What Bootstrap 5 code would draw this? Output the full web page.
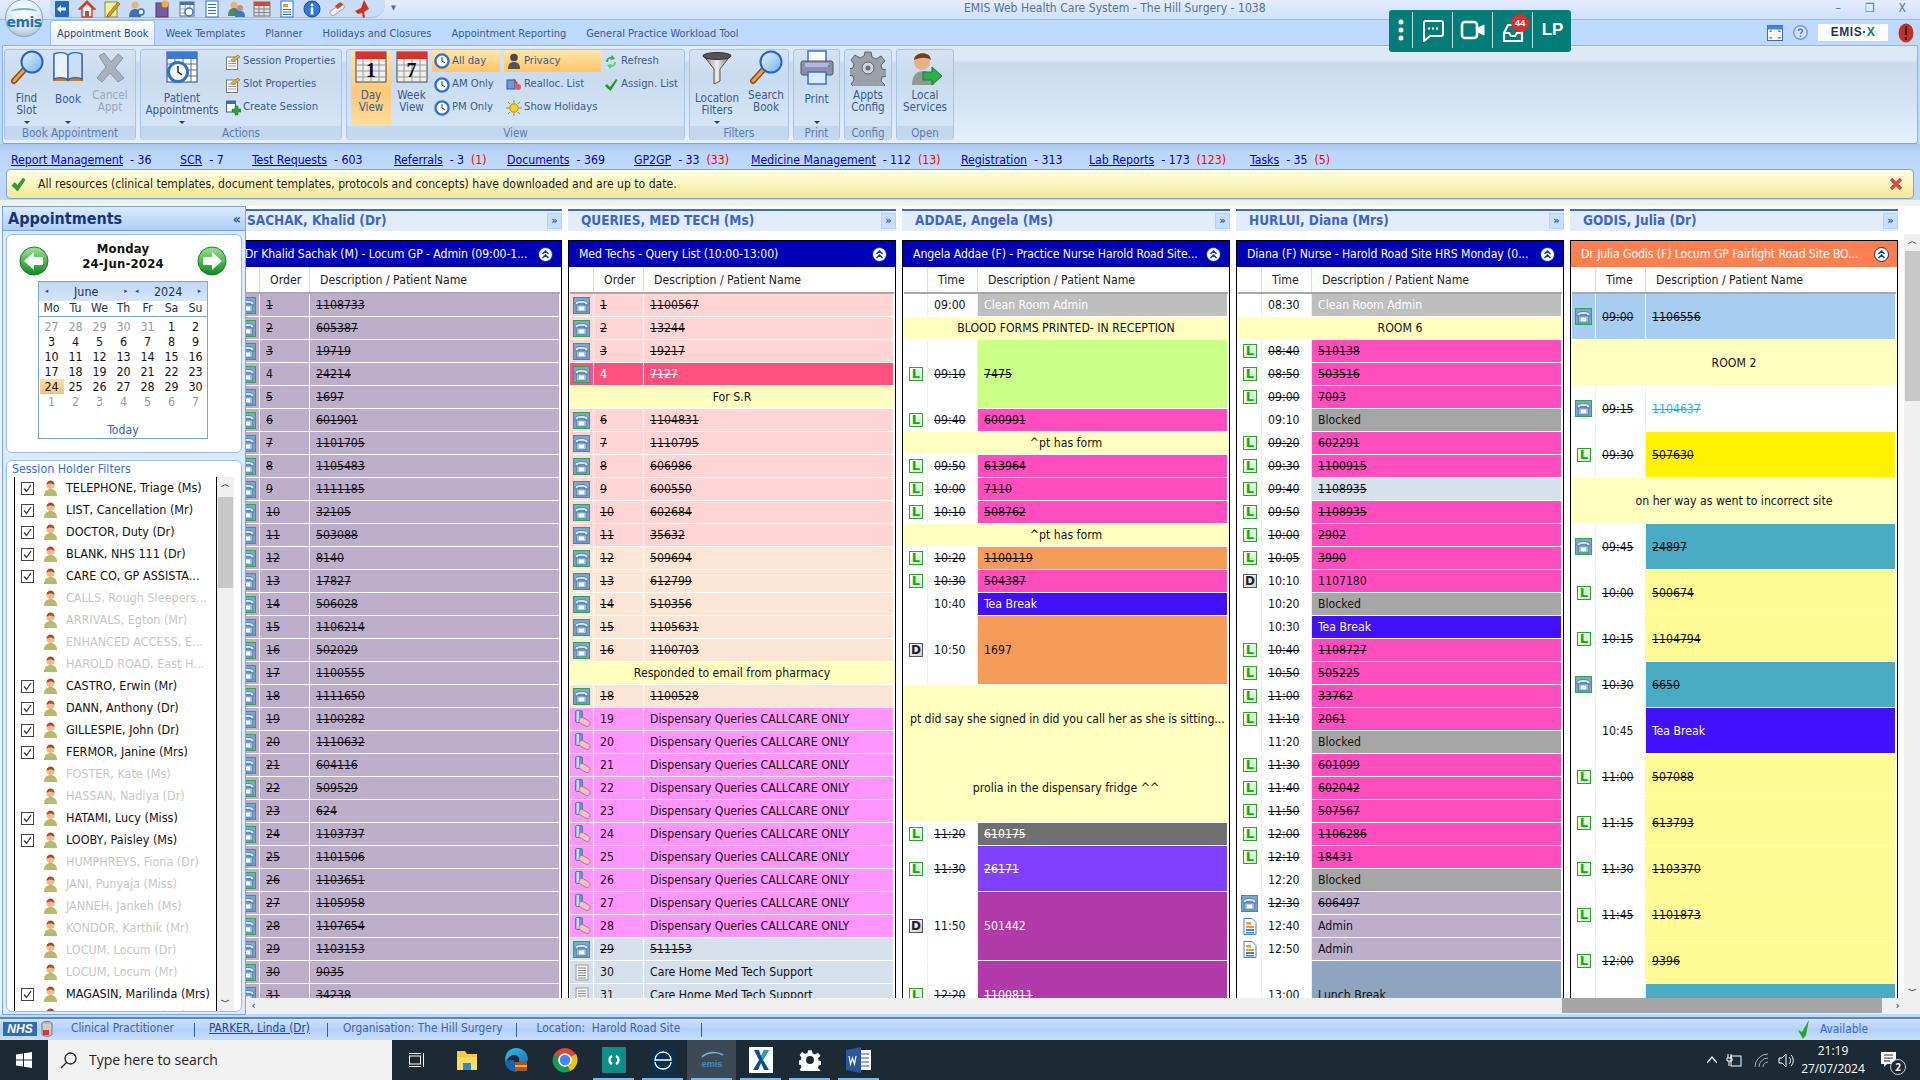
<!DOCTYPE html>
<html lang="en"><head><meta charset="utf-8"><title>EMIS Web Health Care System</title>
<link href="https://cdn.jsdelivr.net/npm/bootstrap@5.3.0/dist/css/bootstrap.min.css" rel="stylesheet">
<script src="https://cdn.jsdelivr.net/npm/bootstrap@5.3.0/dist/js/bootstrap.bundle.min.js"></script>
<style>
:root{--f:"DejaVu Sans Condensed","DejaVu Sans",sans-serif}
html,body{width:1920px;height:1080px;overflow:hidden;margin:0}
body{font-family:var(--f);font-stretch:condensed;font-size:12.2px;color:#111;background:#bfd9fb;display:flex;flex-direction:column;position:relative}
svg{display:block;flex:none}
.titlebar{height:20px;flex:none;background:linear-gradient(#e4edfc,#cfe0f9);border-bottom:1px solid #9fbde9;color:#5a6f98;font-size:12.1px;line-height:16px}
.qat{margin-left:50px;width:335px;height:18px;background:#c9ddf7;border-radius:0 0 14px 8px;border-bottom:1px solid #9fbde9;padding-left:3px;gap:7px}
.qat svg{width:18px;height:18px}
.qatcaret{width:11px;margin-left:6px;color:#56719c;font-size:7px}
.apptitle{margin-left:562px}
.winctl{margin-left:auto;color:#55719c;gap:24px;padding-right:14px;font-size:12px}
.orb{position:absolute;left:5px;top:-1px;width:38px;height:38px;border-radius:50%;background:radial-gradient(circle at 50% 30%,#fff 0,#dbe6f2 55%,#9ab0c8 100%);border:1px solid #8ba3bf;color:#1e76a8;font:700 14px/44px "DejaVu Sans",sans-serif;text-align:center;z-index:5;letter-spacing:-.5px}
.orb::before{content:"";position:absolute;left:5px;top:8px;width:26px;height:7px;border-top:2px solid #5fb4d6;border-radius:50%}
.tabrow{height:25px;flex:none;background:#bdd9fd;padding-left:50px}
.tabrow .nav-link{color:#3c5a8a;padding:5px 10px 0;height:25px;font-size:10.95px;line-height:18px}
.tabrow .nav-link.active{background:linear-gradient(#fff,#e0ecfb);border:1px solid #9dbce8;border-bottom:0;border-radius:3px 3px 0 0;padding:4px 6px 0;color:#2d4a78}
.rightbits{margin-left:auto;padding-right:6px;gap:10px}
.emisx{background:#fff;width:70px;height:17px;color:#1d3763;font:700 12px/17px "Liberation Sans",sans-serif;text-align:center;letter-spacing:.5px}
.emisx i{font-style:normal;color:#0c7f7a}
.ribbon{height:99px;flex:none;margin:0 2px;border:1px solid #8fb3e2;border-radius:2px 2px 3px 3px;border-bottom:1px solid #62b3c8;background:linear-gradient(#dde9f7 0,#dde9f7 14%,#cadaed 18%,#d4e4f6 60%,#e4f0fe 100%);padding:3px 0 0 1px;gap:4px}
.rg{height:91px;border:1px solid #a8c3e3;border-radius:3px;display:flex;flex-direction:column;flex:none;background:linear-gradient(#d5e3f3,#c9dbef 30%,#d7e7f8)}
.rg-b{height:76px;display:flex}
.rg-l{height:14px;background:#c3d7ee;color:#5b7ca9;font-size:11.5px;line-height:14px;text-align:center}
.rb{display:flex;flex-direction:column;align-items:center;height:76px;flex:none;color:#3a5b8d;font-size:11.6px;line-height:12px;text-align:center}
.rb svg.big{width:36px;height:36px}
.rb .lb{padding-top:3px}.rb .lbc{padding-top:6px}.rb .lb1{padding-top:7px}
.rb .car{width:0;height:0;border:3px solid transparent;border-top:3.5px solid #22406e;border-bottom:0;margin-top:5px}
.rb .lb1+.car{margin-top:16px}
.rb.dis{color:#98a7ba}
.rb.act{background:linear-gradient(#ffe29f,#ffc878 55%,#ffdc9a) center 2px/100% 73px no-repeat}
.rs{height:23px;display:flex;align-items:center;gap:2px;color:#3a5b8d;font-size:11.2px;white-space:nowrap;padding-left:2px}
.rs svg{width:16px;height:16px}
.rs.act{background:linear-gradient(#ffe6ad,#ffc468);height:22px;margin-bottom:1px}
.links{height:24px;flex:none;background:linear-gradient(#a9c6ec,#bcd6fa 40%,#bfd9fb);padding:8px 0 0 11px;line-height:16px;font-size:12.2px;color:#0000c8;white-space:nowrap}
.links span{flex:none}
.links span:nth-child(1){width:169px}.links span:nth-child(2){width:72px}.links span:nth-child(3){width:142px}.links span:nth-child(4){width:113px}.links span:nth-child(5){width:127px}.links span:nth-child(6){width:117px}.links span:nth-child(7){width:210px}.links span:nth-child(8){width:128px}.links span:nth-child(9){width:161px}
.links a{color:#0000e8}
.links b{font-weight:400;color:#f00}
.notice{height:30px;flex:none;margin:1px 6px;border:1px solid #7ea6d8;border-radius:4px;background:linear-gradient(#fffee4,#fbf6bd 50%,#f1e690);padding:0 10px 0 4px;gap:12px;color:#222;font-size:12.1px}
.main{flex:1;min-height:0;display:flex;background:#f0f0f0}
.side{width:244px;flex:none;margin-left:2px;height:809px;margin-top:6px;border:1px solid #7ba6e0;background:#dae9fb}
.side-h{height:24px;background:linear-gradient(#dcebfd,#aecdf3);border-bottom:1px solid #7ba6e0;padding:0 4px 0 5px;color:#15357a;font:700 16px/24px var(--f)}
.side-h .cv{margin-left:auto;font-size:14px;color:#31558f;font-weight:700}
.pane{background:#fff;border:1px solid #9cbdea;border-radius:6px;margin:3px 3px 0 3px}
.datepane{height:219px;padding:6px 0 0}
.nav-arrow{width:30px;height:30px;margin-top:5px}
.datehd{font-weight:700;line-height:15px;font-size:13px;color:#111;letter-spacing:.2px}
.cal{width:170px;height:158px;border:1px solid #7ba6e0;margin:5px 0 0 31px}
.cal-h{height:19px;background:linear-gradient(#bfd6f3,#d7e6f8);padding:0 6px;color:#23324a;line-height:19px;font-size:12.4px}
.cal-h i{font-style:normal;font-size:7px;color:#2f4c77}
.cal-g{display:grid;grid-template-columns:repeat(7,24px);padding-left:.5px;text-align:center}
.cal-w{height:15px;line-height:15px;border-bottom:1px solid #7ba6e0;margin-bottom:2px;padding-bottom:15px;color:#23324a;font-size:12.2px}
.cal-w span{height:15px}
.cal-d span{height:15px;line-height:15px;font-size:12.4px;color:#111}
.cal-d .o{color:#9a9a9a}.cal-d .s{background:linear-gradient(#fde0a8,#f7c272)}
.cal-t{height:25px;line-height:25px;text-align:center;color:#3c63a8;margin-top:9px}
.holdpane{height:552px;margin-top:7px;padding:1px 0 0 5px;overflow:hidden}
.holdpane .t{color:#3b6fd8;line-height:15px;font-size:12.3px;padding-bottom:0}
.hold{height:534px;margin-left:2px;border-left:1px solid #000;overflow:hidden}
.hold-l{width:202px;border-right:1px solid #000;flex:none;overflow:hidden}
.hr{height:22px;padding-left:6px;gap:8.5px;white-space:nowrap;font-size:12.5px;align-items:center;display:flex;color:#111}
.hr .cb{width:13px;height:13px;flex:none;border:1px solid #444;display:block}
.hr .cb svg{width:11px;height:11px}
.hr .nb{width:13px;flex:none}
.hr svg.pe{width:15px;height:16px}
.hr.off{color:#c7c7c7}
.vs{background:#f0f0f0;display:flex;flex-direction:column;align-items:center;color:#555;flex:none}
.vs .th{background:#c8c8c8}
.vs .ar{font-size:9px;line-height:14px;height:16px;font-weight:700;color:#444}
.hold .vs{width:17px}.hold .vs .th{width:15px;height:91px;margin:4px 0 0}
.hold .vs .sp{flex:1}
.center{flex:1;min-width:0;display:flex;flex-direction:column;background:#fff;margin-top:6px}
.cols-w{flex:1;min-height:0;display:flex;overflow:hidden;background:#fff}
.cols{flex:1;min-width:0;overflow:hidden;display:flex;gap:6px;padding-top:3px}
.col{width:328px;flex:none}
.col:first-child{margin-left:-12px}
.resh{height:22px;background:#e3ecfa;border-top:2px solid #3a6ccc;color:#3b66c6;font:700 13.5px/19px var(--f);padding-left:13px;position:relative}
.resh .go{position:absolute;right:0;top:2px;width:15px;height:16px;background:#c8dffb;border:1px solid #b6d2f5;color:#2c56a8;font:700 11px/14px var(--f);text-align:center}
.sess{margin-top:9px;height:760px;border:1px solid #000;overflow:hidden;background:#fff}
.sess-t{height:26px;background:#0000b8;color:#fff;padding:0 3px 0 10px;line-height:26px;font-size:12.2px;white-space:nowrap}
.sess-t.or{background:#ff7f50}
.sess-t span{flex:1;min-width:0;overflow:hidden;letter-spacing:-.1px}
.sess-t svg{width:15px;height:15px;margin:0 5px 0 auto;align-self:center}
.gh{height:27px;border-bottom:2px solid #a9a9a9;border-top:1px solid #fff;line-height:25px;color:#222;margin:0 1px}
.gh div{border-right:1px solid #ddd}
.gh div:last-child{border:0}
.c1{width:24px;flex:none;display:flex;align-items:center;justify-content:center}
.c2{width:50px;flex:none;padding-left:6px;white-space:nowrap}
.c3{flex:1;min-width:0;padding-left:6px;white-space:nowrap;overflow:hidden}
.gh .c2{padding-left:10px}.gh .c3{padding-left:10px}
.rw{display:flex;margin:0 2px 1px 1px;height:22px;line-height:22px;color:#111}
.rw.r2{height:45px;line-height:47px}.rw.r3{height:68px;line-height:68px}
.rw .c1,.rw .c2{border-right:1px solid #efefef}
.rw.solid .c1,.rw.solid .c2{border-right-color:#fff}
.rw.note{display:block;background:#ffffc0;text-align:center;margin:0 0 1px;white-space:nowrap;overflow:hidden;text-overflow:ellipsis;padding:0 8px}
.rw.note.tl{text-align:left;padding:0 2px 0 7px;letter-spacing:-.05px}
.tag{width:14px;height:14px;display:block;border:1px solid #2da52d;background:linear-gradient(135deg,#fff,#cfe8cf);color:#0bb00b;font:700 13px/12px "DejaVu Sans",sans-serif;text-align:center;margin-left:1px}
.tag-d{border-color:#555;background:linear-gradient(135deg,#fff,#ccc);color:#222;font-size:12px}
.ph{width:17px;height:17px}.dsp{width:18px;height:18px}
.docn{width:16px;height:17px}
.b-pur{background:#bdaecb}.b-pink{background:#ffd4d4}.b-peach{background:#fbe5d4}.b-hot{background:#ff5080;color:#fff}.b-dis{background:#ff96ff}.b-slate{background:#d5e0eb}
.b-gry{background:#bebebe;color:#fff}.b-grn{background:#ccff88}.b-mag{background:#ff4dbf}.b-org{background:#f59c5a}.b-tea{background:#4010ff;color:#fff}.b-dk{background:#707070;color:#fff}.b-vio{background:#8040ff;color:#fff}.b-plum{background:#b03aa8;color:#fff}.b-blk{background:#a6a6a6}.b-lun{background:#8fa4bf}
.b-sky{background:#a7cdf0}.b-yel{background:#fff200}.b-teal{background:#4aabc5}.b-lem{background:#fffb94}.b-wh{background:#fff;color:#1eb4e8}
.vsr{width:20px;padding-left:4px;background:#fff}
.vsr .in{background:#f0f0f0;width:16px;height:765px;margin-top:28px;display:flex;flex-direction:column;align-items:center}
.vsr .th{width:15px;height:150px;background:#c8c8c8;margin-top:2px}
.vsr .ar{font-size:9px;font-weight:700;color:#444;height:15px;line-height:15px}
.hs{height:16px;flex:none;background:#f0f0f0;color:#444;font-size:10px;font-weight:700;line-height:16px}
.hs .th{width:320px;height:15px;background:#a5a5a5;margin-left:auto}
.hs .e{width:15px;text-align:center;flex:none}
.status{height:23px;margin-top:3px;flex:none;border-top:2px solid #5d86bd;background:linear-gradient(#cde2fb,#b5d0f6 50%,#c8defa);color:#3f64a8;padding:0 0 0 3px;font-size:11.8px;line-height:19px}
.status .nhs{background:#2f6cb5;color:#fff;font:italic 700 12px/14px "Liberation Sans",sans-serif;width:34px;height:14px;text-align:center;margin-top:3px}
.status .sep{border-left:1px solid #355e9e;height:14px;margin-top:4px}
.status a{color:#24498f}
.avail{margin-left:auto;padding-right:52px;color:#3668d8;gap:8px}
.task{height:40px;flex:none;background:#1c2a36;color:#fff}
.start{width:48px}
.search{width:344px;background:#f1f1f1;color:#222;font:14px/40px "Open Sans",sans-serif;padding-left:12px;gap:12px}
.tb{width:49px;height:40px;position:relative}
.tb.on::after{content:"";position:absolute;left:4px;right:4px;bottom:0;height:2px;background:#76b9ed}
.tb.cur{background:#3d4954}
.tray{margin-left:auto;font:12px/18px "Open Sans",sans-serif;padding-right:22px}
.clock{text-align:center;width:66px;margin:0 14px 0 6px}
.teal{position:absolute;left:1389px;top:10px;width:182px;height:42px;background:#047d78;border-radius:3px;z-index:6;color:#fff}
.teal>div{height:36px;margin-top:2px;border-left:1px solid #bfe0de;width:40px;position:relative;flex:none}
.teal>div:first-child{border:0;width:23px}
.teal .n{position:absolute;right:3px;top:2px;width:18px;height:18px;border-radius:50%;background:#e32b2b;color:#fff;font:700 9.5px/18px "Liberation Sans",sans-serif;text-align:center}
.teal .lp{font:700 17px/36px "Liberation Sans",sans-serif}
</style></head>
<body>
<svg width="0" height="0" class="overflow-hidden" style="flex:none"><defs>
<linearGradient id="gG" x1="0" y1="0" x2="0" y2="1"><stop offset="0" stop-color="#9be48f"/><stop offset="1" stop-color="#0e8a1e"/></linearGradient>
<linearGradient id="gM" x1="0" y1="0" x2="1" y2="1"><stop offset="0" stop-color="#e8f4ff"/><stop offset="1" stop-color="#74b2ef"/></linearGradient>
<linearGradient id="gF" x1="0" y1="0" x2="1" y2="0"><stop offset="0" stop-color="#777"/><stop offset=".5" stop-color="#eee"/><stop offset="1" stop-color="#666"/></linearGradient>
<linearGradient id="gE" x1="0" y1="0" x2="1" y2="1"><stop offset="0" stop-color="#2fc5e0"/><stop offset="1" stop-color="#1a70c0"/></linearGradient>
<symbol id="mag" viewBox="0 0 36 36"><path d="M15 20 5 31" stroke="#8a4f12" stroke-width="6" stroke-linecap="round"/><path d="M15 20 5 31" stroke="#e8a040" stroke-width="3" stroke-linecap="round"/><circle cx="23" cy="12" r="10.5" fill="url(#gM)" stroke="#2563c8" stroke-width="2"/></symbol>
<symbol id="book" viewBox="0 0 36 36"><path d="M3 5h30v26H3z" fill="#c47a2a"/><path d="M4 4c5-2 11-2 14 1v25c-3-3-9-3-14-1z" fill="#e8f2ff" stroke="#3468b4" stroke-width="1.4"/><path d="M32 4c-5-2-11-2-14 1v25c3-3 9-3 14-1z" fill="#c9def8" stroke="#3468b4" stroke-width="1.4"/></symbol>
<symbol id="xx" viewBox="0 0 36 36"><path d="M7 6l5-3 7 9 7-8 5 4-8 10 9 10-6 4-8-9-8 9-5-4 9-11z" fill="#aab3bd" stroke="#8b95a0"/></symbol>
<symbol id="calc" viewBox="0 0 36 36"><rect x="3" y="2" width="30" height="30" fill="#fff" stroke="#2b3d70"/><rect x="3" y="2" width="30" height="7" fill="#3c78d8"/><path d="M3 14h30M3 20h30M3 26h30M11 9v23M19 9v23M27 9v23" stroke="#667"/><circle cx="14" cy="22" r="9.5" fill="#fff" stroke="#2f6fd0" stroke-width="3"/><path d="M14 16v6l4 3" stroke="#223" stroke-width="1.5" fill="none"/></symbol>
<symbol id="docp" viewBox="0 0 16 16"><rect x="1.5" y="3" width="11" height="12.5" fill="#fff" stroke="#7b7b7b"/><path d="M3 7h8M3 9.500h8M3 12h8" stroke="#99a"/><path d="M6 6l7-5 2 2-7 5z" fill="#e4b43a" stroke="#8a6a1a" stroke-width=".6"/></symbol>
<symbol id="docg" viewBox="0 0 16 16"><rect x="1.5" y="1" width="9" height="11" fill="#fff" stroke="#47639a"/><rect x="1.5" y="1" width="9" height="3" fill="#3a68c0"/><path d="M10 6h3v3h3v3h-3v3h-3v-3H7V9h3z" fill="#27a834" stroke="#156b1d" stroke-width=".5"/></symbol>
<symbol id="cal1" viewBox="0 0 36 36"><rect x="3" y="2" width="30" height="30" fill="#eee" stroke="#444"/><rect x="3" y="2" width="30" height="7" fill="#d8322a"/><path d="M3 15h30M3 21h30M3 27h30M10 9v23M18 9v23M26 9v23" stroke="#999"/></symbol>
<symbol id="clk" viewBox="0 0 16 16"><circle cx="8" cy="8" r="6.6" fill="#fff" stroke="#2f74d2" stroke-width="2.4"/><path d="M8 4v4l3 2" stroke="#345" fill="none"/></symbol>
<symbol id="priv" viewBox="0 0 16 16"><circle cx="8" cy="4.5" r="3.8" fill="#4a4a4a"/><path d="M2 16c0-6 3-7 6-7s6 1 6 7z" fill="#555"/></symbol>
<symbol id="rl" viewBox="0 0 16 16"><rect x="1" y="3" width="8" height="9" fill="#6a9ad8" stroke="#36598f"/><path d="M7 1l5 5-2 2z" fill="#d83a3a"/><circle cx="12" cy="10" r="3" fill="#e25a5a"/></symbol>
<symbol id="sun" viewBox="0 0 16 16"><circle cx="8" cy="8" r="4.2" fill="#f5d426" stroke="#a98d10"/><path d="M8 0v3M8 13v3M0 8h3M13 8h3M2 2l2 2M12 12l2 2M14 2l-2 2M4 12l-2 2" stroke="#a98d10"/></symbol>
<symbol id="ref" viewBox="0 0 16 16"><path d="M3 8c0-3 2-5 5-5l1-2 3 4-5 1 1-1.500c-2 0-3 1-3 3.500z" fill="#2cb34a"/><path d="M13 8c0 3-2 5-5 5l-1 2-3-4 5-1-1 1.500c2 0 3-1 3-3.500z" fill="#5bd25f"/></symbol>
<symbol id="chk" viewBox="0 0 16 16"><path d="M2 9l2-2 3 3 6-8 1.500 1L7.500 14z" fill="#1e9a2a"/></symbol>
<symbol id="fun" viewBox="0 0 36 36"><path d="M4 5h28L21 19v12l-6 3V19z" fill="url(#gF)" stroke="#555"/><ellipse cx="18" cy="6" rx="14" ry="3.500" fill="#555" stroke="#333"/></symbol>
<symbol id="prn" viewBox="0 0 36 36"><rect x="9" y="1" width="18" height="12" fill="#fff" stroke="#2f74d2" stroke-width="1.500"/><rect x="2" y="11" width="32" height="14" rx="2" fill="#8b8fa8" stroke="#555"/><rect x="6" y="13" width="24" height="4" fill="#b9b3e8"/><rect x="9" y="22" width="18" height="12" fill="#dbeaff" stroke="#2f74d2" stroke-width="1.500"/><circle cx="30" cy="16" r="1.300" fill="#2cc04a"/></symbol>
<symbol id="gear" viewBox="0 0 36 36"><path d="M15 2h6l1 5 4 2 5-3 4 5-4 4 1 4 5 1v6l-5 1-1 4 4 4-5 4-4-3-4 2-1 4h-6l-1-4-4-2-4 3-5-5 3-4-1-4-5-1v-6l5-1 1-4-3-4 4-5 5 3 4-2z" fill="#9aa0a8" stroke="#5d636b"/><circle cx="18" cy="18" r="6" fill="#cfd4da" stroke="#5d636b"/><circle cx="18" cy="18" r="2.500" fill="#6a7078"/></symbol>
<symbol id="loc" viewBox="0 0 36 36"><path d="M5 35c0-10 5-14 11-14s11 4 11 14z" fill="#8f9a8f"/><circle cx="15" cy="12" r="8" fill="#e7b08a"/><path d="M7 10c0-8 16-10 17 0-4-3-10-3-17 0z" fill="#7a3d18"/><path d="M16 22h9v-5l10 9-10 9v-5h-9z" fill="#2caf4a" stroke="#1a7a30"/></symbol>
<symbol id="ph" viewBox="0 0 16 16"><rect x=".5" y=".5" width="15" height="15" fill="#78a9cf" stroke="#2fa64a"/><path d="M2 5.500C4 2.500 12 2.500 14 5.500V7.500H11V6H5V7.500H2z" fill="#d9e8f3" stroke="#3e6c96" stroke-width=".7"/><rect x="3" y="7.500" width="10" height="6.500" fill="#9bbcdc" stroke="#3e6c96" stroke-width=".7"/><rect x="5.500" y="9" width="5" height="3.500" fill="#fff"/></symbol>
<symbol id="dsp" viewBox="0 0 18 18"><rect x="2.500" y="0.500" width="7" height="12" rx="1.500" fill="#5d97d5" stroke="#3e6c96" stroke-width=".7"/><rect x="3.500" y="1" width="2.500" height="11" fill="#c5dcf4"/><rect x="5.500" y="9" width="12" height="6" rx="3" transform="rotate(30 11.500 12)" fill="#f0c4c4" stroke="#a66" stroke-width=".7"/></symbol>
<symbol id="lst" viewBox="0 0 16 16"><rect x="2" y=".5" width="12" height="15" fill="#f6f6f6" stroke="#9a9a9a"/><path d="M4 3.500h8M4 6h8M4 8.500h8M4 11h8M4 13.500h8" stroke="#8a8a8a"/></symbol>
<symbol id="doc" viewBox="0 0 16 17"><path d="M2 .5h8l4 4v12H2z" fill="#fff" stroke="#3e82d8"/><rect x="4" y="4" width="5" height="2.500" fill="#f09a2a"/><rect x="4" y="8" width="8" height="2" fill="#f09a2a"/><rect x="4" y="11" width="8" height="2" fill="#3e82d8"/><rect x="4" y="14" width="8" height="1.500" fill="#3e82d8"/></symbol>
<symbol id="pe" viewBox="0 0 15 16"><path d="M1 16c0-5 3-7 6.500-7s6.500 2 6.500 7z" fill="#b4bb6a"/><circle cx="7.500" cy="5" r="4" fill="#efb98a"/><path d="M3.500 5c0-6 8-6 8 0-2-2-6-2-8 0z" fill="#a94e1c"/></symbol>
<symbol id="carr" viewBox="0 0 15 15"><circle cx="7.500" cy="7.500" r="7" fill="#fff" stroke="#0a2a6a"/><path d="M4.500 7 7.500 4l3 3M4.500 11l3-3 3 3" fill="none" stroke="#0c3ea0" stroke-width="1.500"/></symbol>
</defs></svg>

<div class="orb">emis</div>
<div class="teal d-flex">
 <div class="d-flex align-items-center justify-content-center"><svg width="6" height="22" viewBox="0 0 6 22"><circle cx="3" cy="3" r="2.500" fill="#fff"/><circle cx="3" cy="11" r="2.500" fill="#fff"/><circle cx="3" cy="19" r="2.500" fill="#fff"/></svg></div>
 <div class="d-flex align-items-center justify-content-center"><svg width="24" height="24" viewBox="0 0 24 24" fill="none" stroke="#fff" stroke-width="2"><path d="M4 3h16a2 2 0 0 1 2 2v11a2 2 0 0 1-2 2H9l-6 5V4z"/><path d="M8 10.500h.01M12 10.500h.01M16 10.500h.01" stroke-linecap="round" stroke-width="2.400"/></svg></div>
 <div class="d-flex align-items-center justify-content-center"><svg width="26" height="20" viewBox="0 0 26 20" fill="none" stroke="#fff" stroke-width="2.600"><rect x="2" y="2" width="15" height="16" rx="3"/><path d="M18 8l6-3v10l-6-3z" fill="#fff" stroke-width="1"/></svg></div>
 <div class="d-flex align-items-center justify-content-center"><svg width="24" height="24" viewBox="0 0 24 24" fill="none" stroke="#fff" stroke-width="2.200" class="mt-1"><path d="M7 5h10l4 8v8H3v-8z"/><path d="M3 13h5l2 3h4l2-3h5"/></svg><span class="n">44</span></div>
 <div class="text-center lp">LP</div>
</div>

<header class="titlebar d-flex">
 <div class="qat d-flex align-items-center">
  <svg viewBox="0 0 18 18"><rect x="2" y="1" width="14" height="16" rx="1" fill="#1f68c8"/><path d="M13 7.500H8V5L4 9l4 4v-2.500h5z" fill="#fff"/></svg>
  <svg viewBox="0 0 18 18"><path d="M9 1 1 9h3v8h10V9h3z" fill="#f3f3f3" stroke="#c8402a" stroke-width="1.400"/><path d="M9 1 1 9h3l5-5 5 5h3z" fill="#d8402a"/><rect x="7" y="11" width="4" height="6" fill="#b05a3a"/></svg>
  <svg viewBox="0 0 18 18"><rect x="2" y="2" width="12" height="15" fill="#f6ee9a" stroke="#8f8a40"/><path d="M5 14 15 2l2 2L7 16l-3 1z" fill="#d89a1e" stroke="#6d4d10" stroke-width=".6"/></svg>
  <svg viewBox="0 0 18 18"><circle cx="7" cy="5" r="3.500" fill="#e7b08a"/><path d="M1 17c0-6 3-8 6-8s6 2 6 8z" fill="#3f6fb4"/><circle cx="13" cy="12" r="3" fill="#fff" stroke="#2f74d2" stroke-width="1.400"/></svg>
  <svg viewBox="0 0 18 18"><rect x="3" y="3" width="12" height="14" fill="#7a5aa0" stroke="#4a3a70"/><circle cx="12" cy="4" r="3.500" fill="#f0b030"/></svg>
  <svg viewBox="0 0 18 18"><rect x="2" y="2" width="14" height="14" fill="#fff" stroke="#4f6fa8"/><rect x="2" y="2" width="14" height="3" fill="#4f6fa8"/><path d="M2 9h14M2 13h14M7 5v11M12 5v11" stroke="#99a"/><circle cx="11" cy="12" r="4" fill="#fff" stroke="#2f74d2" stroke-width="1.500"/></svg>
  <svg viewBox="0 0 18 18"><rect x="3" y="1" width="12" height="16" fill="#fff" stroke="#2f74d2"/><path d="M5 4.500h8M5 7.500h8M5 10.500h8M5 13.500h8" stroke="#2f74d2"/></svg>
  <svg viewBox="0 0 18 18"><circle cx="6" cy="5" r="3.500" fill="#e7b08a"/><path d="M0 16c0-6 3-8 6-8s6 2 6 8z" fill="#4f8a5a"/><circle cx="12" cy="8" r="3" fill="#c98f6a"/><path d="M7 17c0-5 2-6 5-6s5 1 5 6z" fill="#3a78d0"/></svg>
  <svg viewBox="0 0 18 18"><rect x="1" y="2" width="16" height="14" fill="#ddd" stroke="#777"/><rect x="1" y="2" width="16" height="4" fill="#d04a3a"/><path d="M1 9h16M1 12.500h16M6 6v10M11 6v10" stroke="#888"/></svg>
  <svg viewBox="0 0 18 18"><rect x="3" y="1" width="12" height="16" fill="#fff" stroke="#2f74d2"/><rect x="5" y="4" width="5" height="3" fill="#f09a2a"/><path d="M5 9.500h8M5 12h8M5 14.500h8" stroke="#2f74d2"/></svg>
  <svg viewBox="0 0 18 18"><circle cx="9" cy="9" r="8" fill="#2d78d8" stroke="#1a4f9c"/><circle cx="9" cy="5" r="1.500" fill="#fff"/><rect x="7.700" y="7.500" width="2.600" height="7" fill="#fff"/></svg>
  <svg viewBox="0 0 18 18"><rect x="1" y="7" width="16" height="5.500" rx="2.700" transform="rotate(-35 9 9.500)" fill="#f3f3f3" stroke="#aaa"/><path d="M9.500 9 14.800 5.300A2.700 2.700 0 0 0 11.500 2.500L7 6z" fill="#d8402a"/></svg>
  <svg viewBox="0 0 18 18"><path d="M11 0 8 8 2 11l3 3 4-1 1 5 2-1-1-5 5-3z" fill="#d03020"/></svg>
 </div>
 <div class="qatcaret">▼</div>
 <div class="apptitle">EMIS Web Health Care System - The Hill Surgery - 1038</div>
 <div class="winctl d-flex"><span>–</span><span>❐</span><span>X</span></div>
</header>
<div class="tabrow d-flex">
 <ul class="nav flex-nowrap">
  <li class="nav-item"><a class="nav-link active" href="#">Appointment Book</a></li>
  <li class="nav-item"><a class="nav-link" href="#">Week Templates</a></li>
  <li class="nav-item"><a class="nav-link" href="#">Planner</a></li>
  <li class="nav-item"><a class="nav-link" href="#">Holidays and Closures</a></li>
  <li class="nav-item"><a class="nav-link" href="#">Appointment Reporting</a></li>
  <li class="nav-item"><a class="nav-link" href="#">General Practice Workload Tool</a></li>
 </ul>
 <div class="rightbits d-flex align-items-center">
  <svg width="16" height="16" viewBox="0 0 16 16"><rect x=".5" y=".5" width="15" height="15" fill="#fff" stroke="#3a6cc0"/><rect x=".5" y=".5" width="15" height="4" fill="#3a8ad8"/><path d="M3 7v-1h2M13 7v-1h-2M3 12v1h2M13 12v1h-2" stroke="#d02020" fill="none"/></svg>
  <svg width="15" height="15" viewBox="0 0 15 15"><circle cx="7.500" cy="7.500" r="6.800" fill="#cfe0f4" stroke="#7f9cc4" stroke-width="1.400"/><path d="M5.500 6c0-2.500 4-2.500 4 0 0 1.500-2 1.500-2 3M7.500 10.500v1.500" stroke="#4a6a9a" fill="none" stroke-width="1.300"/></svg>
  <div class="emisx">EMIS·<i>X</i></div>
  <svg width="16" height="20" viewBox="0 0 16 20"><ellipse cx="8" cy="10" rx="7.500" ry="9.500" fill="#c8301e"/><path d="M8 3v9M8 14v3" stroke="#300" stroke-width="2"/></svg>
 </div>
</div>

<section class="ribbon d-flex">
 <div class="rg" style="width:132px"><div class="rg-b">
   <div class="rb" style="width:43px"><svg class="big"><use href="#mag"/></svg><div class="lbc">Find<br>Slot</div><div class="car"></div></div>
   <div class="rb" style="width:40px"><svg class="big"><use href="#book"/></svg><div class="lb1">Book</div><div class="car"></div></div>
   <div class="rb dis" style="width:44px"><svg class="big"><use href="#xx"/></svg><div class="lb">Cancel<br>Appt</div></div>
  </div><div class="rg-l">Book Appointment</div></div>
 <div class="rg" style="width:202px"><div class="rg-b">
   <div class="rb" style="width:82px"><svg class="big"><use href="#calc"/></svg><div class="lbc">Patient<br>Appointments</div><div class="car"></div></div>
   <div class="d-flex flex-column">
    <div class="rs"><svg><use href="#docp"/></svg>Session Properties</div><div class="rs"><svg><use href="#docp"/></svg>Slot Properties</div><div class="rs"><svg><use href="#docg"/></svg>Create Session</div>
   </div></div><div class="rg-l">Actions</div></div>
 <div class="rg" style="width:339px"><div class="rg-b ps-1">
   <div class="rb act" style="width:40px"><div class="position-relative"><svg class="big"><use href="#cal1"/></svg><b class="position-absolute top-50 start-50 translate-middle pt-1" style="font:700 20px 'Liberation Serif',serif;color:#111">1</b></div><div class="lb">Day<br>View</div></div>
   <div class="rb" style="width:41px"><div class="position-relative"><svg class="big"><use href="#cal1"/></svg><b class="position-absolute top-50 start-50 translate-middle pt-1" style="font:700 20px 'Liberation Serif',serif;color:#111">7</b></div><div class="lb">Week<br>View</div></div>
   <div class="d-flex flex-column" style="width:68px">
    <div class="rs act"><svg><use href="#clk"/></svg>All day</div><div class="rs"><svg><use href="#clk"/></svg>AM Only</div><div class="rs"><svg><use href="#clk"/></svg>PM Only</div></div>
   <div class="d-flex flex-column ms-1" style="width:97px">
    <div class="rs act"><svg><use href="#priv"/></svg>Privacy</div><div class="rs"><svg><use href="#rl"/></svg>Realloc. List</div><div class="rs"><svg><use href="#sun"/></svg>Show Holidays</div></div>
   <div class="d-flex flex-column">
    <div class="rs"><svg><use href="#ref"/></svg>Refresh</div><div class="rs"><svg><use href="#chk"/></svg>Assign. List</div></div>
  </div><div class="rg-l">View</div></div>
 <div class="rg" style="width:100px"><div class="rg-b">
   <div class="rb" style="width:54px"><svg class="big"><use href="#fun"/></svg><div class="lbc">Location<br>Filters</div><div class="car"></div></div>
   <div class="rb" style="width:44px"><svg class="big"><use href="#mag"/></svg><div class="lb">Search<br>Book</div></div>
  </div><div class="rg-l">Filters</div></div>
 <div class="rg" style="width:47px"><div class="rg-b"><div class="rb w-100"><svg class="big"><use href="#prn"/></svg><div class="lb1">Print</div><div class="car"></div></div></div><div class="rg-l">Print</div></div>
 <div class="rg" style="width:48px"><div class="rg-b"><div class="rb w-100"><svg class="big"><use href="#gear"/></svg><div class="lb">Appts<br>Config</div></div></div><div class="rg-l">Config</div></div>
 <div class="rg" style="width:58px"><div class="rg-b"><div class="rb w-100"><svg class="big"><use href="#loc"/></svg><div class="lb">Local<br>Services</div></div></div><div class="rg-l">Open</div></div>
</section>

<nav class="links d-flex">
 <span><a href="#">Report Management</a> &nbsp;- 36</span><span><a href="#">SCR</a> &nbsp;- 7</span><span><a href="#">Test Requests</a> &nbsp;- 603</span><span><a href="#">Referrals</a> &nbsp;- 3 &nbsp;<b>(1)</b></span><span><a href="#">Documents</a> &nbsp;- 369</span><span><a href="#">GP2GP</a> &nbsp;- 33 &nbsp;<b>(33)</b></span><span><a href="#">Medicine Management</a> &nbsp;- 112 &nbsp;<b>(13)</b></span><span><a href="#">Registration</a> &nbsp;- 313</span><span><a href="#">Lab Reports</a> &nbsp;- 173 &nbsp;<b>(123)</b></span><span><a href="#">Tasks</a> &nbsp;- 35 &nbsp;<b>(5)</b></span>
</nav>
<div class="notice d-flex align-items-center">
 <svg width="15" height="15" viewBox="0 0 16 16"><path d="M1 9l3-3 3 3 6-8 2 2-8 12z" fill="#2e9a38" stroke="#1f6a28" stroke-width=".6"/></svg>
 <span>All resources (clinical templates, document templates, protocols and concepts) have downloaded and are up to date.</span>
 <svg class="ms-auto" width="14" height="14" viewBox="0 0 14 14"><path d="M2 2l10 10M12 2 2 12" stroke="#e0473f" stroke-width="3.400"/></svg>
</div>

<main class="main">
 <aside class="side">
  <div class="side-h d-flex">Appointments<span class="cv">«</span></div>
  <div class="pane datepane">
   <div class="d-flex justify-content-between" style="padding:0 14px 0 12px">
    <svg class="nav-arrow" viewBox="0 0 30 30"><circle cx="15" cy="15" r="14" fill="url(#gG)" stroke="#1c7a2a"/><path d="M5 15l10-9v5h9v8h-9v5z" fill="#fff"/></svg>
    <div class="datehd text-center"><div>Monday</div><div>24-Jun-2024</div></div>
    <svg class="nav-arrow" viewBox="0 0 30 30"><circle cx="15" cy="15" r="14" fill="url(#gG)" stroke="#1c7a2a"/><path d="M25 15l-10-9v5H6v8h9v5z" fill="#fff"/></svg>
   </div>
   <div class="cal">
    <div class="cal-h d-flex"><i>◂</i><span class="text-center" style="width:76px">June</span><i>▸</i><i class="ms-2">◂</i><span class="text-center flex-fill">2024</span><i>▸</i></div>
    <div class="cal-g cal-w"><span>Mo</span><span>Tu</span><span>We</span><span>Th</span><span>Fr</span><span>Sa</span><span>Su</span></div>
    <div class="cal-g cal-d" id="days"></div>
    <div class="cal-t">Today</div>
   </div>
  </div>
  <div class="pane holdpane">
   <div class="t">Session Holder Filters</div>
   <div class="hold d-flex">
    <div class="hold-l" id="hold"></div>
    <div class="vs"><div class="ar">︿</div><div class="th"></div><div class="sp"></div><div class="ar">﹀</div></div>
   </div>
  </div>
 </aside>
 <div class="center">
  <div class="cols-w">
   <div class="cols" id="cols"></div>
   <div class="vsr"><div class="in"><div class="ar">︿</div><div class="th"></div><div class="flex-fill"></div><div class="ar">﹀</div></div></div>
  </div>
  <div class="hs d-flex"><div class="e">‹</div><div class="th"></div><div class="e ms-2">›</div><div class="e"></div></div>
 </div>
</main>

<footer class="status d-flex">
 <div class="nhs">NHS</div>
 <svg class="ms-1" style="margin-top:2px" width="12" height="16" viewBox="0 0 12 16"><ellipse cx="6" cy="3" rx="5" ry="2.500" fill="#bbb" stroke="#777"/><path d="M1 3v10c0 3 10 3 10 0V3" fill="#ccc" stroke="#777"/><rect x="2" y="9" width="6" height="5" fill="#e03030"/></svg>
 <span style="margin-left:18px">Clinical Practitioner</span><span class="sep" style="margin-left:20px"></span>
 <a href="#" style="margin-left:14px">PARKER, Linda (Dr)</a><span class="sep" style="margin-left:17px"></span>
 <span style="margin-left:15px">Organisation: The Hill Surgery</span><span class="sep" style="margin-left:13px"></span>
 <span style="margin-left:20px">Location: &nbsp;Harold Road Site</span><span class="sep" style="margin-left:21px"></span>
 <div class="avail d-flex align-items-center"><svg width="15" height="19" viewBox="0 0 15 19"><path d="M1 10l4 2 7-12-3 15-3 4z" fill="#25a82a"/></svg><span>Available</span></div>
</footer>
<div class="task d-flex">
 <div class="start d-flex align-items-center justify-content-center"><svg width="16" height="16" viewBox="0 0 16 16" fill="#fff"><path d="M0 2.500 7 1.500V7.500H0zM8 1.300 16 0V7.500H8zM0 8.500H7V14.500L0 13.500zM8 8.500H16V16L8 14.700z"/></svg></div>
 <div class="search d-flex align-items-center"><svg width="17" height="17" viewBox="0 0 17 17" fill="none" stroke="#222" stroke-width="1.300"><circle cx="10.500" cy="6.500" r="5.500"/><path d="M6.500 10.500 1 16"/></svg><span>Type here to search</span></div>
 <div class="tb d-flex align-items-center justify-content-center" style="width:50px"><svg width="16" height="16" viewBox="0 0 16 16" fill="none" stroke="#fff"><rect x=".5" y="4" width="11" height="8"/><path d="M0 1.500h12M0 14.500h12M14.500 1v14" /></svg></div>
 <div class="tb d-flex align-items-center justify-content-center"><svg width="24" height="24" viewBox="0 0 24 24"><path d="M2 3h8l2 3h10v16H2z" fill="#f8c93e"/><path d="M2 9h20v13H2z" fill="#ffdb63"/><rect x="8" y="15" width="8" height="7" fill="#2a8ad4"/></svg></div>
 <div class="tb d-flex align-items-center justify-content-center"><svg width="26" height="26" viewBox="0 0 26 26"><path d="M2 13C2 6 7 1 13 1c7 0 12 5 12 11 0 3-3 4-6 4-2 0-3-1-3-2 1-4-2-6-5-6-5 0-8 5-8 9z" fill="url(#gE)"/><path d="M2 15c1 7 6 10 12 10l-3-12c-3 0-7 0-9 2z" fill="#1763b0"/><rect x="12" y="15" width="12" height="9" fill="#a8571c"/><rect x="12" y="18" width="12" height="2" fill="#f5a53c"/></svg></div>
 <div class="tb d-flex align-items-center justify-content-center"><svg width="26" height="26" viewBox="0 0 26 26"><circle cx="13" cy="13" r="12" fill="#db4437"/><path d="M13 13 24 7a12 12 0 0 1-6 17z" fill="#f4c20d"/><path d="M13 13 18 24A12 12 0 0 1 2 8z" fill="#0f9d58"/><circle cx="13" cy="13" r="6" fill="#4285f4" stroke="#fff" stroke-width="1.600"/></svg></div>
 <div class="tb on d-flex align-items-center justify-content-center"><svg width="24" height="26" viewBox="0 0 24 26"><rect width="24" height="26" rx="1" fill="#0c8f88"/><path d="M10 9a4.500 4.500 0 0 0 0 8M14 9a4.500 4.500 0 0 1 0 8" fill="none" stroke="#fff" stroke-width="2.400"/></svg></div>
 <div class="tb on d-flex align-items-center justify-content-center"><svg width="24" height="26" viewBox="0 0 24 26"><rect width="24" height="26" fill="#0a3050"/><path d="M4 13a8 8 0 0 1 16 0zM4 15a8 7 0 0 0 16 0" fill="none" stroke="#fff" stroke-width="1.300"/></svg></div>
 <div class="tb on cur d-flex align-items-center justify-content-center"><svg width="26" height="22" viewBox="0 0 26 22"><path d="M3 8C8 3 18 2 24 6" fill="none" stroke="#6fb0dd" stroke-width="1.600"/><text x="13" y="18" font-family="Liberation Sans,sans-serif" font-size="9" font-weight="700" fill="#3f8cc9" text-anchor="middle">emis</text></svg></div>
 <div class="tb on d-flex align-items-center justify-content-center"><svg width="24" height="26" viewBox="0 0 24 26"><rect width="24" height="26" fill="#fff"/><path d="M5 3h5l2 6 3-6h5l-6 10 6 10h-5l-3-7-3 7H4l6-10z" fill="#0f4d8e"/><path d="M15 3h5l-6 10-2-4z" fill="#27a3a0"/></svg></div>
 <div class="tb on d-flex align-items-center justify-content-center"><svg width="22" height="22" viewBox="0 0 36 36"><path d="M15 2h6l1 5 4 2 5-3 4 5-4 4 1 4 5 1v6l-5 1-1 4 4 4-5 4-4-3-4 2-1 4h-6l-1-4-4-2-4 3-5-5 3-4-1-4-5-1v-6l5-1 1-4-3-4 4-5 5 3 4-2z" fill="#fff"/><circle cx="18" cy="18" r="6.500" fill="#1c2a36"/></svg></div>
 <div class="tb on d-flex align-items-center justify-content-center"><svg width="26" height="26" viewBox="0 0 26 26"><rect x="8" y="3" width="17" height="20" fill="#fff"/><path d="M10 7h13M10 11h13M10 15h13M10 19h13" stroke="#2b579a"/><path d="M0 3 15 0v26L0 23z" fill="#2b579a"/><path d="M3 9l1.500 8 2-6 2 6L10 9" fill="none" stroke="#fff" stroke-width="1.200"/></svg></div>
 <div class="tray d-flex align-items-center">
  <svg class="me-2" width="12" height="8" viewBox="0 0 12 8" fill="none" stroke="#fff" stroke-width="1.200"><path d="M1 7l5-6 5 6"/></svg>
  <svg class="me-2" width="16" height="15" viewBox="0 0 16 15" fill="none" stroke="#fff"><rect x="5" y="3" width="10" height="10"/><path d="M2 1v4M5 1v4M1 5h5v3H1zM3 8v5"/></svg>
  <svg class="mx-1" width="16" height="15" viewBox="0 0 16 15" fill="none" stroke="#aab"><path d="M1 14A13 13 0 0 1 14 1M5 14a9 9 0 0 1 9-9M9 14a5 5 0 0 1 5-5"/></svg>
  <svg class="ms-1" width="16" height="15" viewBox="0 0 16 15" fill="none" stroke="#fff"><path d="M1 5h3l4-4v13l-4-4H1zM11 4c2 2 2 5 0 7M13 2c3 3 3 8 0 11"/></svg>
  <div class="clock"><div>21:19</div><div>27/07/2024</div></div>
  <div class="position-relative"><svg width="18" height="18" viewBox="0 0 18 18"><path d="M1 1h15v12H7l-3 3v-3H1z" fill="#fff"/><path d="M4 4h9M4 7h9M4 10h6" stroke="#1c2a36"/></svg><span class="position-absolute rounded-circle text-center" style="right:-8px;bottom:-6px;width:16px;height:16px;background:#1c2a36;border:1px solid #ccc;font:700 10px/14px 'Open Sans',sans-serif">2</span></div>
 </div>
</div>

<script>
const S=(id,c='')=>`<svg class="${c}"><use href="#${id}"/></svg>`;
let dh='';[27,28,29,30,31].forEach(d=>dh+=`<span class="o">${d}</span>`);
for(let d=1;d<=30;d++)dh+=`<span class="${d==24?'s':''}">${d}</span>`;
for(let d=1;d<=7;d++)dh+=`<span class="o">${d}</span>`;
document.getElementById('days').innerHTML=dh;
const tick='<span class="cb"><svg viewBox="0 0 11 11"><path d="M2 5.500l2.500 3L9 2" fill="none" stroke="#333" stroke-width="1.200"/></svg></span>';
const H=[[1,'TELEPHONE, Triage (Ms)'],[1,'LIST, Cancellation (Mr)'],[1,'DOCTOR, Duty (Dr)'],[1,'BLANK, NHS 111 (Dr)'],[1,'CARE CO, GP ASSISTA...'],[0,'CALLS, Rough Sleepers...'],[0,'ARRIVALS, Egton (Mr)'],[0,'ENHANCED ACCESS, E...'],[0,'HAROLD ROAD, East H...'],[1,'CASTRO, Erwin (Mr)'],[1,'DANN, Anthony (Dr)'],[1,'GILLESPIE, John (Dr)'],[1,'FERMOR, Janine (Mrs)'],[0,'FOSTER, Kate (Ms)'],[0,'HASSAN, Nadiya (Dr)'],[1,'HATAMI, Lucy (Miss)'],[1,'LOOBY, Paisley (Ms)'],[0,'HUMPHREYS, Fiona (Dr)'],[0,'JANI, Punyaja (Miss)'],[0,'JANNEH, Jankeh (Ms)'],[0,'KONDOR, Karthik (Mr)'],[0,'LOCUM, Locum (Dr)'],[0,'LOCUM, Locum (Mr)'],[1,'MAGASIN, Marilinda (Mrs)'],[0,'MARTINEZ, Rosa (Ms)']];
document.getElementById('hold').innerHTML=H.map(([c,n])=>`<div class="hr ${c?'':'off'}">${c?tick:'<span class="nb"></span>'}<svg class="pe"><use href="#pe"/></svg><span>${n}</span></div>`).join('');
const I={L:'<span class="tag">L</span>',D:'<span class="tag tag-d">D</span>',P:S('ph','ph'),U:S('dsp','dsp'),T:S('lst','docn'),O:S('doc','docn'),'':''};
const st=t=>`<span class="text-decoration-line-through">${t}</span>`;
const note=(t,h='',c='')=>`<div class="rw note ${h} ${c}">${t}</div>`;
const ord=(i,n,t,b,sn=1,sd=1)=>`<div class="rw solid ${b}"><div class="c1">${I[i]}</div><div class="c2">${sn?st(n):n}</div><div class="c3">${sd?st(t):t}</div></div>`;
const tim=(i,tm,t,b,h='',sd)=>{const s=sd===undefined?(i=='L'||i=='P'):sd;return `<div class="rw ${h}"><div class="c1">${I[i]}</div><div class="c2">${s?st(tm):tm}</div><div class="c3 ${b}">${s?st(t):t}</div></div>`};
const head=(a)=>`<div class="gh d-flex"><div class="c1"></div><div class="c2">${a}</div><div class="c3">Description / Patient Name</div></div>`;
const col=(name,title,ha,body,or='')=>`<section class="col"><div class="resh">${name}<span class="go">»</span></div><div class="sess"><div class="sess-t d-flex ${or}"><span>${title}</span><svg><use href="#carr"/></svg></div>${head(ha)}${body}</div></section>`;
const c1n=[1108733,605387,19719,24214,1697,601901,1101705,1105483,1111185,32105,503088,8140,17827,506028,1106214,502029,1100555,1111650,1100282,1110632,604116,509529,624,1103737,1101506,1103651,1105958,1107654,1103153,9035,34238];
const c1=c1n.map((n,i)=>ord('P',i+1,n,'b-pur',i!=3)).join('');
let c2='';
[[1,1100567],[2,13244],[3,19217]].forEach(r=>c2+=ord('P',r[0],r[1],'b-pink'));
c2+=ord('P',4,7127,'b-hot',0)+note('For S.R');
[[6,1104831],[7,1110795],[8,606986],[9,600550],[10,602684],[11,35632]].forEach(r=>c2+=ord('P',r[0],r[1],'b-pink'));
[[12,509694],[13,612799],[14,510356],[15,1105631],[16,1100703]].forEach(r=>c2+=ord('P',r[0],r[1],'b-peach'));
c2+=note('Responded to email from pharmacy')+ord('P',18,1100528,'b-peach');
for(let i=19;i<=28;i++)c2+=ord('U',i,'Dispensary Queries CALLCARE ONLY','b-dis',0,0);
c2+=ord('P',29,511153,'b-slate')+ord('T',30,'Care Home Med Tech Support','b-slate',0,0)+ord('T',31,'Care Home Med Tech Support','b-slate',0,0);
const c3=tim('','09:00','Clean Room Admin','b-gry')+note('BLOOD FORMS PRINTED- IN RECEPTION')+tim('L','09:10',7475,'b-grn','r3')+tim('L','09:40',600991,'b-mag')+note('^pt has form')+tim('L','09:50',613964,'b-mag')+tim('L','10:00',7110,'b-mag')+tim('L','10:10',508762,'b-mag')+note('^pt has form')+tim('L','10:20',1100119,'b-org')+tim('L','10:30',504387,'b-mag')+tim('','10:40','Tea Break','b-tea')+tim('D','10:50',1697,'b-org','r3')+note('pt did say she signed in did you call her as she is sitting...','r3','tl')+note('prolia in the dispensary fridge ^^','r3')+tim('L','11:20',610175,'b-dk')+tim('L','11:30',26171,'b-vio','r2')+tim('D','11:50',501442,'b-plum','r3')+tim('L','12:20',1100811,'b-plum','r3');
const c4=tim('','08:30','Clean Room Admin','b-gry')+note('ROOM 6')+
[['L','08:40',510138,'b-mag'],['L','08:50',503516,'b-mag'],['L','09:00',7093,'b-mag'],['','09:10','Blocked','b-blk'],['L','09:20',602291,'b-mag'],['L','09:30',1100915,'b-mag'],['L','09:40',1108935,'b-slate'],['L','09:50',1108935,'b-mag'],['L','10:00',2902,'b-mag'],['L','10:05',3990,'b-mag'],['D','10:10',1107180,'b-mag'],['','10:20','Blocked','b-blk'],['','10:30','Tea Break','b-tea'],['L','10:40',1108727,'b-mag'],['L','10:50',505225,'b-mag'],['L','11:00',33762,'b-mag'],['L','11:10',2061,'b-mag'],['','11:20','Blocked','b-blk'],['L','11:30',601099,'b-mag'],['L','11:40',602042,'b-mag'],['L','11:50',507567,'b-mag'],['L','12:00',1106286,'b-mag'],['L','12:10',18431,'b-mag'],['','12:20','Blocked','b-blk'],['P','12:30',606497,'b-pur'],['O','12:40','Admin','b-pur'],['O','12:50','Admin','b-pur'],['','13:00','Lunch Break','b-lun','r3']].map(r=>tim(...r)).join('');
const c5=`<div class="rw r2 solid b-sky"><div class="c1">${I.P}</div><div class="c2">${st('09:00')}</div><div class="c3">${st(1106556)}</div></div>`+note('ROOM 2','r2')+tim('P','09:15',1104637,'b-wh','r2')+tim('L','09:30',507630,'b-yel','r2')+note('on her way as went to incorrect site','r2')+
[['P','09:45',24897,'b-teal'],['L','10:00',500674,'b-lem'],['L','10:15',1104794,'b-lem'],['P','10:30',6650,'b-teal'],['','10:45','Tea Break','b-tea'],['L','11:00',507088,'b-lem'],['L','11:15',613793,'b-lem'],['L','11:30',1103370,'b-lem'],['L','11:45',1101873,'b-lem'],['L','12:00',9396,'b-lem'],['','','','b-teal']].map(r=>tim(r[0],r[1],r[2],r[3],'r2')).join('');
document.getElementById('cols').innerHTML=
 col('SACHAK, Khalid (Dr)','Dr Khalid Sachak (M) - Locum GP - Admin (09:00-1...','Order',c1)+
 col('QUERIES, MED TECH (Ms)','Med Techs - Query List (10:00-13:00)','Order',c2)+
 col('ADDAE, Angela (Ms)','Angela Addae (F) - Practice Nurse Harold Road Site...','Time',c3)+
 col('HURLUI, Diana (Mrs)','Diana (F) Nurse - Harold Road Site HRS Monday (0...','Time',c4)+
 col('GODIS, Julia (Dr)','Dr Julia Godis (F) Locum GP Fairlight Road Site BO...','Time',c5,'or');
</script>
</body></html>
